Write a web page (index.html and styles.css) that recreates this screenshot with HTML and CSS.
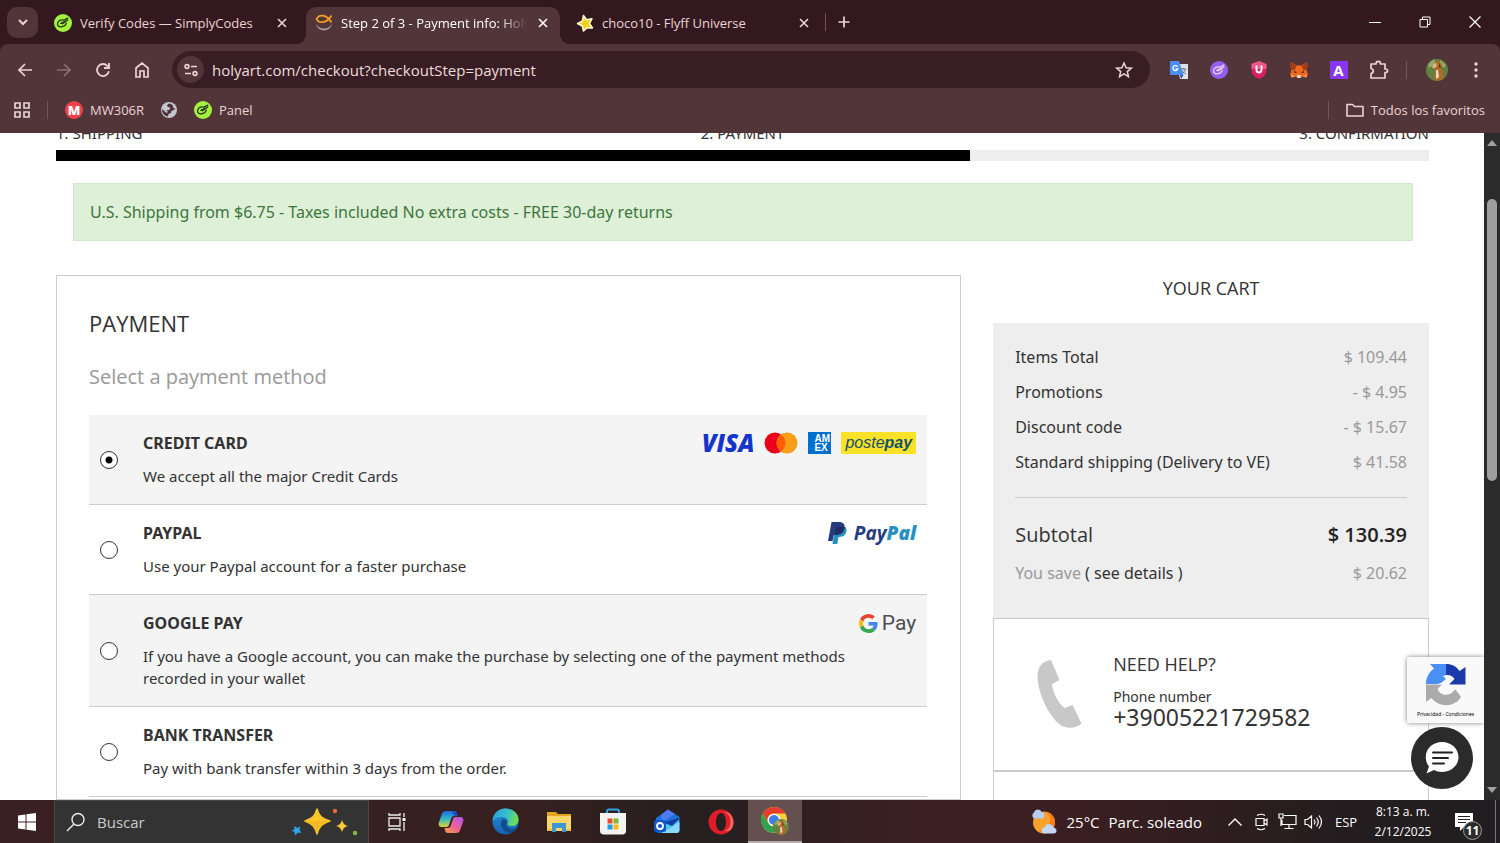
FILE: index.html
```html
<!DOCTYPE html>
<html lang="en">
<head>
    <meta charset="UTF-8">
    <meta name="viewport" content="width=device-width, initial-scale=1.0">
    <title>Step 2 of 3 - Payment info: Holyart</title>
    <link rel="stylesheet" href="styles.css">
</head>
<body>
    <!-- shared icon shapes -->
    <svg class="defs" aria-hidden="true">
        <defs>
            <symbol id="i-close" viewBox="0 0 12 12"><path d="M2 2l8 8M10 2l-8 8" stroke="currentColor" stroke-width="1.6" fill="none"/></symbol>
            <symbol id="i-hand" viewBox="0 0 18 18">
                <path d="M13.800 4.200L10 6.200C7.200 5.200 4 6.600 3.600 9.300c-.3 2.200 1.200 3.700 3.400 3.500 2.800-.2 4.800-1.600 5.200-3.600M8.500 9.700L13.800 6M6.800 9.300c1.400-.2 3.200-1.800 4.800-1.900" fill="none" stroke="currentColor" stroke-width="1.300" stroke-linecap="round" stroke-linejoin="round"/>
            </symbol>
            <symbol id="i-dog" viewBox="0 0 22 22">
                <circle cx="11" cy="11" r="11" fill="#64803f"/>
                <path d="M2 6a11 11 0 0 1 7-5.800L8 6 3 9zM14 1l6 5-2 3-4-3z" fill="#93ab68"/>
                <path d="M8 4.500l3-2.500 3 1 2 3-1 3c2 2.500 2.500 6 2 11a11 11 0 0 1-8 1.500c-1-4 0-8 .5-11L6.500 8z" fill="#b06a2c"/>
                <path d="M7 5.500l3-2 1 3.500-3 2.500-2-1z" fill="#e2b477"/>
                <path d="M10 11l2 0 1 7-3 2z" fill="#f0d9b8"/>
                <path d="M13 4l2 4-2 1z" fill="#5c3316"/>
            </symbol>
        </defs>
    </svg>

    <header class="browser">
        <div class="tab-strip">
            <button class="tab-search" aria-label="Search tabs">
                <svg width="12" height="12" viewBox="0 0 12 12"><path d="M2 4l4 4 4-4" fill="none" stroke="currentColor" stroke-width="2"/></svg>
            </button>
            <div class="tabs">
                <div class="tab">
                    <svg class="lime" width="18" height="18"><circle cx="9" cy="9" r="9" fill="#a4f23f"/><use href="#i-hand"/></svg>
                    <span class="tab-title">Verify Codes — SimplyCodes</span>
                    <button class="tab-close" aria-label="Close tab"><svg width="12" height="12"><use href="#i-close"/></svg></button>
                </div>
                <div class="tab active">
                    <svg width="18" height="18" viewBox="0 0 18 18" fill="none">
                        <path d="M16.500 1.500C11.500 10 3.800 9.500 1.500 5.200 4-.3 11.500.3 16.500 8.500" stroke="#f2a020" stroke-width="1.700"/>
                        <path d="M1.200 10c1.200 8.500 14.400 8.500 15.600 0-3.300 6-12.300 6-15.600 0z" fill="#a3989c"/>
                    </svg>
                    <span class="tab-title">Step 2 of 3 - Payment info: Holyart</span>
                    <button class="tab-close" aria-label="Close tab"><svg width="12" height="12"><use href="#i-close"/></svg></button>
                </div>
                <div class="tab">
                    <svg width="18" height="18" viewBox="0 0 18 18"><path d="M7.500 1.500l3 4.200 5.500-1-2.500 4.800 3 4.500-5.300-.2L7.500 17 6.300 12 1.500 9.500l4.800-2.300z" fill="#f3cf1e" stroke="#fffbd0" stroke-width="1.500" stroke-linejoin="round"/></svg>
                    <span class="tab-title">choco10 - Flyff Universe</span>
                    <button class="tab-close" aria-label="Close tab"><svg width="12" height="12"><use href="#i-close"/></svg></button>
                </div>
            </div>
            <span class="divider"></span>
            <button class="new-tab" aria-label="New tab">
                <svg width="12" height="12" viewBox="0 0 12 12"><path d="M6 .5v11M.5 6h11" stroke="currentColor" stroke-width="1.700"/></svg>
            </button>
            <div class="window-controls">
                <button aria-label="Minimize"><svg width="12" height="12" viewBox="0 0 12 12"><path d="M0 6.500h12" stroke="currentColor"/></svg></button>
                <button aria-label="Restore"><svg width="12" height="12" viewBox="0 0 12 12" fill="none" stroke="currentColor"><path d="M1 3.500h7.500V11H1zM3.500 3.500V1H11v7.500H8.500"/></svg></button>
                <button aria-label="Close"><svg width="12" height="12" viewBox="0 0 12 12"><path d="M.5.5l11 11M11.500.5l-11 11" stroke="currentColor" stroke-width="1.200"/></svg></button>
            </div>
        </div>

        <div class="chrome-body">
            <div class="toolbar">
                <button class="tool" aria-label="Back"><svg width="16" height="16" viewBox="0 0 16 16" fill="none" stroke="currentColor" stroke-width="1.700"><path d="M15 8H2M8 2L2 8l6 6"/></svg></button>
                <button class="tool dim" aria-label="Forward" disabled><svg width="16" height="16" viewBox="0 0 16 16" fill="none" stroke="currentColor" stroke-width="1.700"><path d="M1 8h13M8 2l6 6-6 6"/></svg></button>
                <button class="tool" aria-label="Reload"><svg width="16" height="16" viewBox="0 0 16 16" fill="none" stroke="currentColor" stroke-width="1.800"><path d="M13.900 9.300A6 6 0 1 1 12.500 4L14 5.500"/><path d="M14 1v5H9"/></svg></button>
                <button class="tool" aria-label="Home"><svg width="16" height="18" viewBox="0 0 16 18" fill="none" stroke="currentColor" stroke-width="1.700"><path d="M2 7l6-5 6 5v9h-4v-6H6v6H2z"/></svg></button>
                <div class="address">
                    <button class="site-info" aria-label="Site information">
                        <svg width="14" height="14" viewBox="0 0 14 14" fill="none" stroke="currentColor" stroke-width="1.600"><circle cx="3" cy="3.500" r="1.900"/><path d="M7 3.500h6M1 10.500h6"/><circle cx="11" cy="10.500" r="1.900"/></svg>
                    </button>
                    <input class="url" type="text" aria-label="Address" value="holyart.com/checkout?checkoutStep=payment">
                    <button class="bookmark" aria-label="Bookmark this page">
                        <svg width="18" height="18" viewBox="0 0 18 18"><path d="M9 2l2.100 4.700 5.100.5-3.900 3.400 1.200 5L9 12.900l-4.500 2.700 1.200-5-3.900-3.400 5.100-.5z" fill="none" stroke="currentColor" stroke-width="1.500"/></svg>
                    </button>
                </div>
                <div class="extensions">
                    <button class="tool" aria-label="Google Translate"><svg width="18" height="18" viewBox="0 0 18 18"><path d="M7 3h11v15H10z" fill="#dfe2e6"/><path d="M11 8h5M13.500 7v1M15.500 8c-.5 2-2 4-4 5M12 9.500c.8 1.500 2 2.500 4 3.500" stroke="#56747b" fill="none"/><path d="M0 0h9l4.500 14H0z" fill="#4a8df5"/><path d="M10 14h3.500L11 18z" fill="#2459b8"/><path d="M7.500 5.700A2.500 2.500 0 1 0 7.700 8H5.500" stroke="#fff" stroke-width="1.300" fill="none"/></svg></button>
                    <button class="tool" aria-label="SimplyCodes"><svg width="18" height="18"><circle cx="9" cy="9" r="9" fill="#955df5"/><use href="#i-hand"/></svg></button>
                    <button class="tool" aria-label="Shield"><svg width="16" height="18" viewBox="0 0 16 18"><path d="M8 0l7.500 3v6c0 4.500-3.500 7.500-7.500 9-4-1.500-7.500-4.500-7.500-9V3z" fill="#d81f60"/><path d="M8 0l7.500 3v5H.5V3z" fill="#ee5787"/><path d="M5.500 4.500V9a2.500 2.500 0 0 0 5 0V4.500" stroke="#fff" stroke-width="1.900" fill="none"/></svg></button>
                    <button class="tool" aria-label="MetaMask"><svg width="18" height="18" viewBox="0 0 18 18"><path d="M1 1l5.500 3.500h5L17 1l.5 4-1 4 1.200 4-1.200 3.500-4-1L10.800 17H7.200l-1.700-1.500-4 1L.3 13l1.200-4-1-4z" fill="#f0681c"/><path d="M1 1l5.500 4-2 4-3 0-1-4zM17 1l-5.500 4 2 4h3l1-4z" fill="#a63c16"/><path d="M4 9.500l3 2-2.500.5zM14 9.500l-3 2 2.500.5z" fill="#3a2a2c"/><path d="M7 14h4l-.5 3h-3z" fill="#d9dde2"/><path d="M.5 13l5 2.500-4 1zM17.500 13l-5 2.500 4 1z" fill="#fb9b50"/></svg></button>
                    <button class="tool" aria-label="A"><span class="ext-a">A</span></button>
                    <button class="tool" aria-label="Extensions"><svg width="20" height="20" viewBox="0 0 20 20"><path d="M2 4h5c0-3.500 4.500-3.500 4.500 0H16v5c3.500 0 3.500 3.500 0 3.500V18H2v-4.500c3-.5 3-4.500 0-5z" fill="none" stroke="currentColor" stroke-width="1.700" stroke-linejoin="round"/></svg></button>
                </div>
                <span class="divider"></span>
                <button class="tool" aria-label="Profile"><svg width="22" height="22"><use href="#i-dog"/></svg></button>
                <button class="tool" aria-label="Menu"><svg width="4" height="18" viewBox="0 0 4 18" fill="currentColor"><circle cx="2" cy="3" r="1.700"/><circle cx="2" cy="9" r="1.700"/><circle cx="2" cy="15" r="1.700"/></svg></button>
            </div>

            <nav class="bookmarks">
                <button class="plain" aria-label="Apps"><svg width="16" height="16" viewBox="0 0 16 16" fill="none" stroke="currentColor" stroke-width="1.700"><path d="M1 1h5v5H1zM10 1h5v5h-5zM1 10h5v5H1zM10 10h5v5h-5z"/></svg></button>
                <span class="divider"></span>
                <a href="#"><span class="m-badge">M</span>MW306R</a>
                <a href="#" aria-label="Web"><svg width="16" height="16" viewBox="0 0 16 16"><circle cx="8" cy="8" r="8" fill="#c3c7ce"/><path d="M9 1.500C6 2 5.500 3.500 7 5l2 .5-.5 2.500H5.500l1.500 2-1.500 1L1 7c-.3 4 2.500 7 6 7.500l.5-2.500 2.500-1 .5-2 4-2-2-1-1-3z" fill="#503338"/></svg></a>
                <a href="#"><svg class="lime" width="18" height="18"><circle cx="9" cy="9" r="9" fill="#a4f23f"/><use href="#i-hand"/></svg>Panel</a>
                <span class="divider push"></span>
                <a class="all-bookmarks" href="#"><svg width="18" height="14" viewBox="0 0 18 14"><path d="M1 11.500v-10h5.500l2 2H17v9.500H1z" fill="none" stroke="currentColor" stroke-width="1.600" stroke-linejoin="round"/></svg>Todos los favoritos</a>
            </nav>
        </div>
    </header>

    <div class="viewport">
        <div class="page">
            <ol class="steps">
                <li>1. SHIPPING</li>
                <li>2. PAYMENT</li>
                <li>3. CONFIRMATION</li>
            </ol>
            <div class="progress"><div class="progress-bar"></div></div>
            <p class="alert">U.S. Shipping from $6.75 - Taxes included No extra costs - FREE 30-day returns</p>

            <div class="columns">
                <main class="panel">
                    <h1>PAYMENT</h1>
                    <h2>Select a payment method</h2>
                    <div class="methods">
                        <label class="method shaded">
                            <input type="radio" name="method" checked>
                            <span class="method-text">
                                <span class="method-head">
                                    <strong>CREDIT CARD</strong>
                                    <span class="logos">
                                        <span class="visa">VISA</span>
                                        <svg width="34" height="22" viewBox="0 0 34 22"><circle cx="11" cy="11" r="10.500" fill="#eb001b"/><circle cx="23" cy="11" r="10.500" fill="#f79e1b"/><path d="M17 2.400a10.500 10.500 0 0 1 0 17.200 10.500 10.500 0 0 1 0-17.200z" fill="#ff5f00"/></svg>
                                        <span class="amex"><span>AM</span><span>EX</span></span>
                                        <span class="postepay">poste<b>pay</b></span>
                                    </span>
                                </span>
                                <span class="method-desc">We accept all the major Credit Cards</span>
                            </span>
                        </label>
                        <label class="method">
                            <input type="radio" name="method">
                            <span class="method-text">
                                <span class="method-head">
                                    <strong>PAYPAL</strong>
                                    <span class="logos paypal">
                                        <svg width="19" height="22" viewBox="0 0 19 22"><path d="M7 5h10.500c1.300 1.500 1.300 4 .3 6.200-1.200 2.800-3.500 3.800-7.300 3.800l-1.200 7H4.500z" fill="#2790c3"/><path d="M3.500 0H11c4.500 0 6.300 2.500 5.500 6.300-1 4.500-4 6.500-8.500 6.500H5.800L4.500 19H0z" fill="#253b80"/><path d="M8 5h8.500v1.300c-1 4.500-4 6.500-8.500 6.500H6.500z" fill="#222d65"/></svg>
                                        <span>Pay<b>Pal</b></span>
                                    </span>
                                </span>
                                <span class="method-desc">Use your Paypal account for a faster purchase</span>
                            </span>
                        </label>
                        <label class="method shaded">
                            <input type="radio" name="method">
                            <span class="method-text">
                                <span class="method-head">
                                    <strong>GOOGLE PAY</strong>
                                    <span class="logos gpay">
                                        <svg width="19" height="19" viewBox="0 0 48 48"><path fill="#ea4335" d="M24 9.500c3.540 0 6.710 1.220 9.210 3.600l6.850-6.850C35.900 2.380 30.470 0 24 0 14.620 0 6.510 5.380 2.560 13.220l7.980 6.190C12.430 13.720 17.740 9.500 24 9.500z"/><path fill="#4285f4" d="M46.980 24.550c0-1.570-.15-3.090-.38-4.550H24v9.020h12.940c-.58 2.960-2.260 5.480-4.780 7.180l7.730 6c4.510-4.180 7.090-10.360 7.090-17.650z"/><path fill="#fbbc05" d="M10.530 28.590c-.48-1.450-.76-2.990-.76-4.590s.27-3.140.76-4.590l-7.980-6.190C.92 16.460 0 20.120 0 24s.92 7.540 2.560 10.780z"/><path fill="#34a853" d="M24 48c6.480 0 11.930-2.130 15.890-5.810l-7.730-6c-2.150 1.450-4.920 2.300-8.160 2.300-6.260 0-11.570-4.220-13.470-9.910l-7.980 6.190C6.510 42.620 14.620 48 24 48z"/></svg>
                                        <span>Pay</span>
                                    </span>
                                </span>
                                <span class="method-desc">If you have a Google account, you can make the purchase by selecting one of the payment methods recorded in your wallet</span>
                            </span>
                        </label>
                        <label class="method">
                            <input type="radio" name="method">
                            <span class="method-text">
                                <span class="method-head"><strong>BANK TRANSFER</strong></span>
                                <span class="method-desc">Pay with bank transfer within 3 days from the order.</span>
                            </span>
                        </label>
                    </div>
                </main>

                <aside class="side">
                    <h3>YOUR CART</h3>
                    <div class="cart">
                        <table>
                            <tbody>
                                <tr><th scope="row">Items Total</th><td>$ 109.44</td></tr>
                                <tr><th scope="row">Promotions</th><td>- $ 4.95</td></tr>
                                <tr><th scope="row">Discount code</th><td>- $ 15.67</td></tr>
                                <tr><th scope="row">Standard shipping (Delivery to VE)</th><td>$ 41.58</td></tr>
                            </tbody>
                        </table>
                        <table class="totals">
                            <tbody>
                                <tr class="subtotal"><th scope="row">Subtotal</th><td>$ 130.39</td></tr>
                                <tr><th class="muted" scope="row">You save <a href="#">( see details )</a></th><td>$ 20.62</td></tr>
                            </tbody>
                        </table>
                    </div>
                    <section class="help">
                        <svg width="46" height="68" viewBox="0 0 46 68"><path d="M14 0C5 1.500.5 7 .5 16c0 19 14.500 46 26 50.500 7 2.500 14 1 18-3L35.500 45 28 48C22 45 15 31 15 24l7.500-4z" fill="#c8c8c8"/></svg>
                        <div>
                            <h4>NEED HELP?</h4>
                            <p>Phone number</p>
                            <a href="tel:+39005221729582">+39005221729582</a>
                        </div>
                    </section>
                    <section class="next-box"></section>
                </aside>
            </div>
        </div>

        <div class="recaptcha">
            <svg width="40" height="42" viewBox="0 0 40 42">
                <path d="M20 0H4l4 4.500C3 8 0 13.500 0 20h11l4-1 5-4-3-3 3-1z" fill="#4a90f4"/>
                <path d="M20 0c6 0 10.500 2.500 13.500 7L39.500 3v17.500H23l5.500-5.500C26.500 12 24 10.500 20 11z" fill="#1c3aa9"/>
                <path d="M0 20.500h16l-4.500 4.500c2.500 7 12.500 7.500 16 2l2-1.500 5.500 7.500C29 43 14 44.500 5.500 34L0 38z" fill="#ababab"/>
            </svg>
            <small>Privacidad - Condiciones</small>
        </div>
        <button class="chat" aria-label="Open chat">
            <svg width="34" height="32" viewBox="0 0 34 32"><path d="M17 0c9 0 16.500 6.500 16.500 15S26 30 17 30c-3 0-6-.8-8-2l-7.500 3.500L4 24.500C2 22 .8 19 .8 15 .8 6.500 8 0 17 0z" fill="#fff"/><path d="M8 10.500h19M8 16h15M8 21.500h11" stroke="#222" stroke-width="2" stroke-linecap="round"/></svg>
        </button>

        <div class="scrollbar">
            <svg width="10" height="6" viewBox="0 0 10 6"><path d="M5 0l5 6H0z" fill="#a0a0a0"/></svg>
            <div class="track"><div class="thumb"></div></div>
            <svg width="10" height="6" viewBox="0 0 10 6"><path d="M5 6L0 0h10z" fill="#a0a0a0"/></svg>
        </div>
    </div>

    <footer class="taskbar">
        <button class="task" aria-label="Start"><svg width="18" height="18" viewBox="0 0 18 18" fill="#fff"><path d="M0 2.500L7.500 1.500v7H0zM8.500 1.300L18 0v8.500H8.500zM0 9.500h7.500v7L0 15.500zM8.500 9.500H18V18l-9.500-1.300z"/></svg></button>
        <label class="search">
            <svg width="20" height="20" viewBox="0 0 20 20" fill="none" stroke="#eee" stroke-width="1.400"><circle cx="12" cy="7.500" r="6"/><path d="M8 12l-7 7"/></svg>
            <input type="text" placeholder="Buscar">
            <svg width="68" height="28" viewBox="0 0 68 28">
                <path d="M26 1c2 7 4 9 13 12-9 3-11 6-13 13-2-7-4-10-12-13 8-3 10-5 12-12z" fill="#fbc62c" stroke="#fbc62c" stroke-width="1.500" stroke-linejoin="round"/>
                <path d="M26 26c-2-7-4-10-12-13h25c-9 3-11 6-13 13z" fill="#eda91c" opacity=".5"/>
                <path d="M51 12c1 3.500 2.500 5 6 6-3.500 1-5 2.500-6 6-1-3.500-2.500-5-6-6 3.500-1 5-2.500 6-6z" fill="#fcc93a"/>
                <path d="M3 18l3.500 2 3-1.500L8.500 22l2 3-3.500-.5L4 27.500 3.500 24 .5 22.500l3-1z" fill="#2aa5e8"/>
                <circle cx="44" cy="3" r="2.200" fill="#e5683a"/><circle cx="64" cy="25" r="2.200" fill="#7cc04b"/>
            </svg>
        </label>
        <button class="task" aria-label="Task view"><svg width="18" height="18" viewBox="0 0 18 18" fill="none" stroke="#eee" stroke-width="1.300"><path d="M1 5h11v8H1zM1 0v2h11V0M1 18v-2h11v2M16 0v4M16 9v9"/><path d="M14.500 5h3v3h-3z" fill="#fff" stroke="none"/></svg></button>
        <button class="task" aria-label="Copilot">
            <svg width="26" height="24" viewBox="0 0 26 24">
                <defs>
                    <linearGradient id="cp1" x1="0" y1="0" x2="0" y2="1"><stop offset="0" stop-color="#1b6de8"/><stop offset=".5" stop-color="#30b8c0"/><stop offset="1" stop-color="#e8cf3a"/></linearGradient>
                    <linearGradient id="cp2" x1="1" y1="0" x2="0" y2="1"><stop offset="0" stop-color="#a457f0"/><stop offset=".5" stop-color="#ee5f98"/><stop offset="1" stop-color="#f8a13c"/></linearGradient>
                </defs>
                <path d="M8 1h8c2 0 2.500 1 3 3l.5 2h-3c-2 0-3 1-3.500 3l-2 6c-.5 1.500-1.500 2-3 2H4c-3 0-4-2-3-5l2.500-7C4.500 2 5.500 1 8 1z" fill="url(#cp1)"/>
                <path d="M18 23h-8c-2 0-2.500-1-3-3l-.5-2h3c2 0 3-1 3.500-3l2-6c.5-1.500 1.500-2 3-2h4c3 0 4 2 3 5l-2.500 7c-1 3-2 4-4.500 4z" fill="url(#cp2)"/>
                <path d="M16 1c2 0 2.500 1 3 3l.5 2H16l-2-5z" fill="#1b50c4"/>
            </svg>
        </button>
        <button class="task" aria-label="Edge">
            <svg width="27" height="27" viewBox="0 0 27 27">
                <defs>
                    <linearGradient id="eg1" x1="0" y1="0" x2="1" y2=".3"><stop offset="0" stop-color="#2a9be0"/><stop offset=".6" stop-color="#35c1c8"/><stop offset="1" stop-color="#6bdc5b"/></linearGradient>
                    <linearGradient id="eg2" x1="0" y1="0" x2="0" y2="1"><stop offset="0" stop-color="#2590dc"/><stop offset="1" stop-color="#1561b2"/></linearGradient>
                </defs>
                <circle cx="13.500" cy="13.500" r="13" fill="url(#eg2)"/>
                <path d="M.5 13C1 5 7 .5 13.500.5 21.500.5 27 6 26.500 12c-.3 4-3 6-7 6-3 0-4.500-1-4-2.500 1.500-2 .5-6-5-6.500-4.500-.5-8.500 1.500-10 4z" fill="url(#eg1)"/>
                <path d="M10 12c-3 5 1 12 8 13 3 0 6-2.500 7.500-6-4 3.500-12 2-11-3.500 1.300-2.500-2-5.500-4.500-3.500z" fill="#134b86"/>
            </svg>
        </button>
        <button class="task" aria-label="File Explorer"><svg width="26" height="22" viewBox="0 0 26 22"><path d="M1 1h9l2 2h13v17H1z" fill="#e3a51e"/><path d="M1 5h24v15H1z" fill="#fbd669"/><path d="M6 12h14v9h-4v-4h-6v4H6z" fill="#3d96d6"/><path d="M1 18h5v2H1zM20 18h5v2h-5z" fill="#f3c145"/></svg></button>
        <button class="task" aria-label="Microsoft Store"><svg width="26" height="27" viewBox="0 0 26 27"><path d="M7 7V3.500C7 2 8 1.500 9 1.500h8c1 0 2 .5 2 2V7" fill="none" stroke="#2ba3e3" stroke-width="2"/><path d="M0 5h26v18c0 2-1.500 3.500-3.500 3.500h-19C1.500 26.500 0 25 0 23z" fill="#f3f3f3"/><path d="M7.500 10.500h5v5h-5z" fill="#ec4b2b"/><path d="M13.500 10.500h5v5h-5z" fill="#7db928"/><path d="M7.500 16.500h5v5h-5z" fill="#1b9fe2"/><path d="M13.500 16.500h5v5h-5z" fill="#fbb817"/></svg></button>
        <button class="task" aria-label="Outlook"><svg width="26" height="25" viewBox="0 0 26 25"><path d="M2 9L14 .5 25.500 8v13c0 2-1 3-3 3H5c-2 0-3-1-3-3z" fill="#1a6fdc"/><path d="M7 6l7-5.500L21 5 8 14z" fill="#4e7cf0"/><path d="M8 14l17-6v13c0 2-1 3-3 3H8z" fill="#4cc3f7"/><path d="M8 24l17.500-11v8c0 2-1 3-3 3z" fill="#89d9fb"/><path d="M8 13l10 4 7.500-7V8L14 12z" fill="#123fa4"/><rect y="11" width="12" height="12" rx="2.500" fill="#1056c8"/><circle cx="6" cy="17" r="3" fill="none" stroke="#fff" stroke-width="1.800"/></svg></button>
        <button class="task" aria-label="Opera"><svg width="26" height="26" viewBox="0 0 26 26"><path fill-rule="evenodd" d="M13 .5a12.500 12.500 0 1 0 0 25 12.500 12.500 0 0 0 0-25zM13 4c3 0 5 4 5 9s-2 9-5 9-5-4-5-9 2-9 5-9z" fill="#e11b28"/><path d="M15 4c9-2 10.500 17 1 18 8 2 9.500-5 9.500-9S22 .8 15 4z" fill="#f0655f"/></svg></button>
        <button class="task running" aria-label="Chrome">
            <svg width="30" height="30" viewBox="0 0 30 30">
                <circle cx="14" cy="14" r="13" fill="#fdd03a"/>
                <path d="M2.700 7.500a13 13 0 0 1 22.600 0H14a6.500 6.500 0 0 0-5.600 9.800z" fill="#e53c2f"/>
                <path d="M2.700 7.500a13 13 0 0 0 11.300 19.500l5.600-9.800a6.500 6.500 0 0 1-11.200 0z" fill="#31a24e"/>
                <circle cx="14" cy="14" r="6.300" fill="#fff"/><circle cx="14" cy="14" r="5" fill="#3f7fea"/>
                <use href="#i-dog" x="13" y="13" width="16" height="16"/>
            </svg>
        </button>

        <div class="tray">
            <button class="weather">
                <svg width="28" height="26" viewBox="0 0 28 26"><circle cx="14" cy="13.500" r="11" fill="#f9a12b"/><path d="M9 22a11 11 0 0 0 16-9c0-6-5-10-10-10 8 4 8 14-6 19z" fill="#f27f1c"/><path d="M4 9.500a3.500 3.500 0 0 1 0-6c1-3.500 6-4 7.500-.5 3.500 0 4 6 .5 6.500z" fill="#b9cdf2"/><path d="M14 24.500c-4-1-3-6 .5-6 1.500-5 8-4.500 9 0 4 .5 4 6 0 6z" fill="#c4d5f6"/></svg>
                <span>25°C</span>
                <span>Parc. soleado</span>
            </button>
            <button class="tray-icon" aria-label="Show hidden icons"><svg width="14" height="8" viewBox="0 0 14 8"><path d="M.5 7.500L7 1l6.500 6.500" fill="none" stroke="#fff" stroke-width="1.400"/></svg></button>
            <button class="tray-icon" aria-label="Meet now"><svg width="13" height="18" viewBox="0 0 13 18" fill="none" stroke="#fff" stroke-width="1.200"><path d="M1 5.500h8v7H1zM9 8l3-2v6l-3-2M2 2.500q4-2.500 8 0M2 15.500q4 2.500 8 0"/></svg></button>
            <button class="tray-icon" aria-label="Network"><svg width="19" height="17" viewBox="0 0 19 17" fill="none" stroke="#fff" stroke-width="1.200"><path d="M6 2.500h12v9H4V7M11 12v3.500M6.500 15.500h9M1 1h4v4H1zM3 5v8"/></svg></button>
            <button class="tray-icon" aria-label="Volume"><svg width="19" height="16" viewBox="0 0 19 16" fill="none" stroke="#fff" stroke-width="1.200"><path d="M1 5.500h2.500L7.500 2v12l-4-3.500H1zM10 5.500q2 2.500 0 5M12.500 3.500q3.500 4.500 0 9M15 1.500q5 6.500 0 13"/></svg></button>
            <button class="lang">ESP</button>
            <button class="clock"><span>8:13 a. m.</span><span>2/12/2025</span></button>
            <button class="notifications" aria-label="Notifications">
                <svg width="18" height="18" viewBox="0 0 18 18"><path d="M0 0h18v14h-9l-4 4v-4H0z" fill="#fff"/><path d="M3 3.500h12M3 6.500h12M3 9.500h8" stroke="#222" stroke-width="1.200"/></svg>
                <span class="count">11</span>
            </button>
        </div>
    </footer>
</body>
</html>
```

FILE: styles.css
```css
*,
*::before,
*::after{
    padding: 0;
    margin: 0;
    box-sizing: border-box;
}
body{
    height: 100vh;
    display: flex;
    flex-direction: column;
    overflow: hidden;
    background-color: #ffffff;
    color: #333333;
    font-family: "Noto Sans", sans-serif;
    font-size: 16px;
}
button,
input{
    font: inherit;
    color: inherit;
    background: none;
    border: none;
    outline: none;
}
a{
    color: inherit;
    text-decoration: none;
}
svg{
    display: block;
    flex: none;
}
.defs{
    position: absolute;
    width: 0;
    height: 0;
}

/* browser window */
.browser{
    flex: none;
    background-color: #33191f;
    color: #ecd3d6;
    font-family: "Open Sans", sans-serif;
    font-size: 13px;
}
.tab-strip{
    height: 44px;
    padding-left: 7px;
    display: flex;
    align-items: center;
}
.tab-strip button,
.tool,
.site-info,
.bookmark{
    display: grid;
    place-items: center;
    flex: none;
}
.tab-search{
    width: 31px;
    height: 31px;
    border-radius: 10px;
    background-color: #523539;
}
.tabs{
    display: flex;
    align-self: flex-end;
    gap: 7px;
    margin-left: 7px;
}
.tab{
    width: 254px;
    height: 37px;
    padding: 0 9px 6px;
    display: flex;
    align-items: center;
    gap: 8px;
    position: relative;
}
.tab-title{
    flex: 1;
    overflow: hidden;
    white-space: nowrap;
}
.tab-close{
    width: 16px;
    height: 20px;
}
.active{
    background-color: #523539;
    color: #ffffff;
    border-radius: 10px 10px 0 0;
}
.active .tab-title{
    mask-image: linear-gradient(to right, #000 85%, transparent);
}
/* curved feet of the selected tab */
.active::before,
.active::after{
    content: "";
    position: absolute;
    bottom: 0;
    width: 10px;
    height: 10px;
}
.active::before{
    right: 100%;
    background: radial-gradient(circle at 0 0, transparent 10px, #523539 10px);
}
.active::after{
    left: 100%;
    background: radial-gradient(circle at 100% 0, transparent 10px, #523539 10px);
}
.divider{
    width: 1px;
    height: 18px;
    background-color: #765358;
    flex: none;
}
.tab-strip .divider{
    margin: 0 8px 0 4px;
}
.new-tab{
    width: 20px;
    height: 20px;
}
.window-controls{
    display: flex;
    margin-left: auto;
    color: #ffffff;
}
.window-controls button{
    width: 50px;
    height: 44px;
}
.lime{
    color: #26361a;
}
.chrome-body{
    background-color: #523539;
    border-radius: 8px 8px 0 0;
}
.toolbar{
    display: flex;
    align-items: center;
    padding: 7px 5px 0 5px;
}
.tool{
    width: 39px;
    height: 37px;
}
.dim{
    color: #8c6d72;
}
.address{
    flex: 1;
    height: 37px;
    margin: 0 9px 0 11px;
    padding: 0 12px 0 5px;
    display: flex;
    align-items: center;
    gap: 8px;
    border-radius: 19px;
    background-color: #381d24;
}
.site-info{
    width: 27px;
    height: 27px;
    border-radius: 50%;
    background-color: #523539;
}
.bookmark{
    width: 28px;
    height: 28px;
}
.url{
    flex: 1;
    font-size: 15px;
    color: #ecdcdc;
}
.extensions{
    display: flex;
    gap: 1px;
}
.ext-a{
    width: 18px;
    height: 18px;
    background-color: #8a35ee;
    color: #ffffff;
    font-size: 15px;
    font-weight: 700;
    line-height: 18px;
    text-align: center;
}
.toolbar .divider{
    margin: 0 10px 0 8px;
}
.bookmarks{
    height: 45px;
    padding: 0 15px 2px 14px;
    display: flex;
    align-items: center;
    gap: 17px;
}
.bookmarks a{
    display: flex;
    align-items: center;
    gap: 7px;
}
.m-badge{
    width: 18px;
    height: 18px;
    border-radius: 50%;
    background-color: #f4404a;
    color: #ffffff;
    font-size: 13px;
    font-weight: 800;
    line-height: 18px;
    text-align: center;
}
.push{
    margin-left: auto;
}

/* checkout page */
.viewport{
    flex: 1;
    min-height: 0;
    display: flex;
    position: relative;
    overflow: hidden;
}
.page{
    flex: 1;
    display: flex;
    flex-direction: column;
    padding: 0 55px 0 56px;
    margin-top: -11px;
}
.steps{
    display: grid;
    grid-template-columns: 1fr 1fr 1fr;
    list-style: none;
    font-size: 15px;
    line-height: 22px;
    padding-bottom: 6px;
}
.steps li:nth-child(2){
    text-align: center;
}
.steps li:last-child{
    text-align: right;
}
.progress{
    height: 11px;
    background-color: #eeeeee;
    flex: none;
}
.progress-bar{
    width: 66.6%;
    height: 100%;
    background-color: #000000;
}
.alert{
    margin: 22px 16px 34px 17px;
    padding: 17px 16px;
    border: 1px solid #d0e9c6;
    background-color: #dff0d8;
    color: #3c763d;
    line-height: 22px;
}
.columns{
    flex: 1;
    display: grid;
    grid-template-columns: 27fr 13fr;
    gap: 32px;
}
.panel{
    border: 1px solid #cccccc;
    padding: 32px 33px 0 32px;
}
h1,
h2,
h3,
h4{
    font-family: "Open Sans", sans-serif;
    font-weight: 400;
}
h1{
    font-size: 22px;
    line-height: 30px;
}
h2{
    margin-top: 24px;
    font-size: 20px;
    line-height: 30px;
    color: #999999;
}
.methods{
    margin-top: 23px;
}
.method{
    display: flex;
    align-items: center;
    gap: 25px;
    padding: 17px 11px;
    border-bottom: 1px solid #cccccc;
}
.shaded{
    background-color: #f4f4f4;
}
.method input{
    appearance: none;
    width: 18px;
    height: 18px;
    border: 1px solid #333333;
    border-radius: 50%;
    background-color: #ffffff;
    flex: none;
}
.method input:checked{
    background-image: radial-gradient(circle, #000000 3px, transparent 4px);
}
.method-text{
    flex: 1;
}
.method-head{
    display: flex;
    align-items: center;
    justify-content: space-between;
    height: 22px;
    margin-bottom: 11px;
}
.method-head strong{
    font-weight: 700;
}
.method-desc{
    display: block;
    padding-right: 24px;
    font-size: 15px;
    line-height: 22px;
}
.logos{
    display: flex;
    align-items: center;
    gap: 10px;
}
.visa{
    color: #1434cb;
    font-family: "Open Sans", sans-serif;
    font-size: 24px;
    font-weight: 800;
    font-style: italic;
    line-height: 22px;
}
.amex{
    width: 23px;
    height: 22px;
    padding: 2px 0 0 6px;
    overflow: hidden;
    background-color: #016fd0;
    color: #ffffff;
    font: bold 10px/9px "Liberation Sans", sans-serif;
}
.amex span{
    display: block;
}
.postepay{
    padding: 0 4px;
    background-color: #f9e227;
    color: #14506a;
    font: italic 16px/22px "Liberation Sans", sans-serif;
}
.paypal{
    gap: 7px;
    color: #253b80;
    font-family: "Open Sans", sans-serif;
    font-size: 19px;
    font-weight: 700;
    font-style: italic;
}
.paypal b{
    color: #2790c3;
}
.gpay{
    gap: 4px;
    color: #4c4f53;
    font-family: Roboto, sans-serif;
    font-size: 21px;
}
.side{
    display: flex;
    flex-direction: column;
}
.side h3{
    font-size: 18px;
    line-height: 26px;
    text-align: center;
    padding-bottom: 22px;
}
.cart{
    padding: 16px 22px 26px;
    background-color: #eeeeee;
}
table{
    width: 100%;
    border-collapse: collapse;
}
th,
td{
    height: 35px;
    font-weight: 400;
    text-align: left;
}
td{
    text-align: right;
    color: #999999;
}
.totals{
    margin-top: 18px;
    border-top: 1px solid #cccccc;
}
.totals tr:last-child th,
.totals tr:last-child td{
    height: 38px;
}
.subtotal th,
.subtotal td{
    height: 56px;
    padding-top: 18px;
    font-family: "Open Sans", sans-serif;
    font-size: 20px;
}
.subtotal td{
    font-weight: 600;
    color: #222222;
}
.muted{
    color: #999999;
}
.muted a{
    color: #333333;
}
.help{
    display: flex;
    align-items: flex-end;
    gap: 30px;
    padding: 32px 43px 42px;
    border: 1px solid #cccccc;
}
.side h4{
    font-size: 18px;
    line-height: 26px;
    margin-bottom: 11px;
}
.help p{
    font-size: 14px;
    line-height: 18px;
}
.help a{
    display: block;
    font-size: 23px;
    line-height: 22px;
}
.next-box{
    flex: 1;
    border: 1px solid #cccccc;
    border-bottom: none;
}

/* floating widgets */
.recaptcha{
    position: absolute;
    right: 16px;
    bottom: 77px;
    width: 77px;
    height: 66px;
    display: flex;
    flex-direction: column;
    align-items: center;
    justify-content: space-between;
    padding: 7px 0 6px;
    border-radius: 2px 0 0 2px;
    background-color: #f9f9f9;
    box-shadow: 0 0 5px #808080;
    clip-path: inset(-6px 0 -6px -6px);
}
.recaptcha small{
    font-size: 5px;
    line-height: 6px;
    color: #000000;
    white-space: nowrap;
}
.chat{
    position: absolute;
    right: 27px;
    bottom: 11px;
    width: 62px;
    height: 62px;
    border-radius: 50%;
    background-color: #2b2b2b;
    display: grid;
    place-items: center;
}
.scrollbar{
    width: 16px;
    padding: 7px 0;
    display: flex;
    flex-direction: column;
    align-items: center;
    background-color: #2b2b2b;
}
.track{
    flex: 1;
    width: 10px;
    padding-top: 53px;
}
.thumb{
    height: 48%;
    border-radius: 5px;
    background-color: #9f9f9f;
}

/* taskbar */
.taskbar{
    flex: none;
    height: 43px;
    display: flex;
    background: linear-gradient(to right, #3a2023 0%, #35201f 35%, #261f20 47%, #3d2022 62%, #3a1e21 72%, #231d1f 90%, #201e20);
    color: #ffffff;
    font-family: "Open Sans", sans-serif;
    font-size: 15px;
}
.task{
    width: 54px;
    display: grid;
    place-items: center;
    flex: none;
}
.running{
    background-color: #64504f;
    border-bottom: 2px solid #b5abab;
}
.search{
    width: 315px;
    margin-right: 1px;
    padding: 0 9px 0 11px;
    display: flex;
    align-items: center;
    gap: 11px;
    border: 1px solid #4a4646;
    border-bottom: none;
    background-color: #333333;
}
.search input{
    flex: 1;
    min-width: 0;
}
.search input::placeholder{
    color: #cccccc;
    opacity: 1;
}
.tray{
    margin-left: auto;
    display: flex;
    align-items: stretch;
}
.weather{
    display: flex;
    align-items: center;
    gap: 9px;
    margin-right: 20px;
}
.tray-icon{
    width: 26px;
    display: grid;
    place-items: center;
}
.lang{
    width: 40px;
    font-size: 13px;
}
.clock{
    width: 74px;
    display: flex;
    flex-direction: column;
    justify-content: center;
    align-items: center;
    font-size: 12px;
    line-height: 20px;
}
.notifications{
    width: 56px;
    padding: 0 0 0 15px;
    display: flex;
    align-items: center;
    position: relative;
    border-right: 1px solid #777777;
    margin-right: 4px;
}
.count{
    position: absolute;
    left: 23px;
    top: 21px;
    width: 19px;
    height: 19px;
    border: 1px solid #999999;
    border-radius: 50%;
    background-color: #2c2c2c;
    font-size: 12px;
    font-weight: 700;
    line-height: 17px;
    text-align: center;
}
```
